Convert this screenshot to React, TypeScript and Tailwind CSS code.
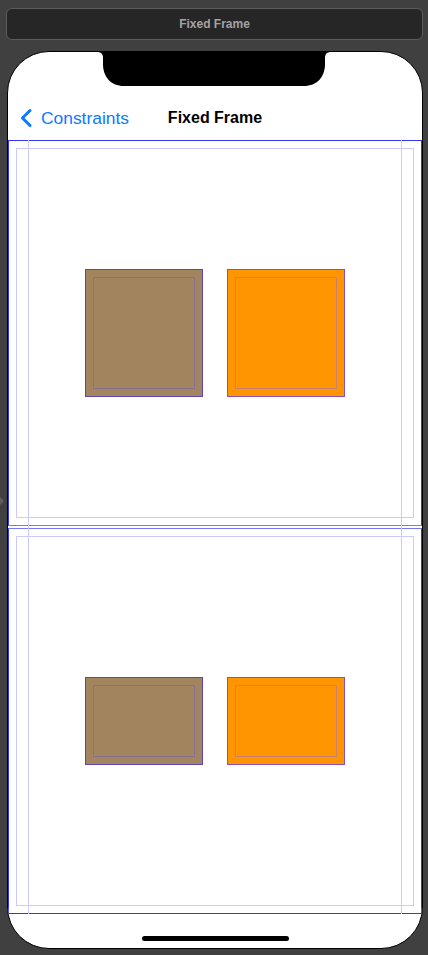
import React from 'react'

const font = { fontFamily: '"Liberation Sans", Arial, sans-serif' }

function FrameBox({ tall, orange }: { tall: boolean; orange?: boolean }) {
  const outer = orange ? 'bg-[#ff9500] border-[#8a52b8]' : 'bg-[#a2845e] border-[#5b45b8]'
  const inner = orange ? 'border-[#c98070]' : 'border-[#85708f]'
  return (
    <div className={`w-[118px] ${tall ? 'h-[128px]' : 'h-[88px]'} border ${outer} p-[7px] flex`}>
      <div className={`flex-1 border ${inner}`} />
    </div>
  )
}

function Section({ tall, className }: { tall: boolean; className?: string }) {
  return (
    <div className={`h-[386px] border-x border-[#3535ee] ${className ?? ''} p-[7px] flex`}>
      <div className="flex-1 border border-[#cacaff] flex items-center justify-center gap-[24px]">
        <FrameBox tall={tall} />
        <FrameBox tall={tall} orange />
      </div>
    </div>
  )
}

export default function App() {
  return (
    <div className="relative w-[428px] h-[955px] bg-[#404040] overflow-hidden flex flex-col" style={font}>
      {/* window title */}
      <div className="ml-[6px] mt-[8px] w-[417px] h-[32px] rounded-[6px] border border-[#5c5c5c] bg-[#262626] flex items-center justify-center text-[12px] font-bold text-[#a3a3a3]">
        Fixed Frame
      </div>

      {/* little side handle */}
      <div className="absolute left-0 top-[497px] w-0 h-0 border-y-[4px] border-y-transparent border-l-[4px] border-l-[#5e5e5e]" />

      {/* device */}
      <div className="relative ml-[7px] mt-[11px] w-[416px] h-[898px] rounded-[42px] border border-black bg-white overflow-hidden flex flex-col">
        <svg className="absolute top-0 left-[89px]" width="234" height="34" viewBox="0 0 234 34">
          <path d="M0 0 C4 0 6 2 6 6 L6 12 C6 25 14 34 27 34 L207 34 C220 34 228 25 228 12 L228 6 C228 2 230 0 234 0 Z" fill="#000" />
        </svg>

        <div className="h-[44px] shrink-0" />

        {/* nav bar */}
        <div className="h-[44px] shrink-0 grid grid-cols-[1fr_auto_1fr] items-center">
          <div className="flex items-center pl-[12px] gap-[9px] text-[#0a7aff] text-[17.4px]">
            <svg width="12" height="20" viewBox="0 0 12 20">
              <path d="M10 2.5 L2.5 10 L10 17.5" fill="none" stroke="#0a7aff" strokeWidth="3" strokeLinecap="round" strokeLinejoin="round" />
            </svg>
            <span>Constraints</span>
          </div>
          <div className="text-[16px] font-bold text-black">Fixed Frame</div>
          <div />
        </div>

        {/* safe area */}
        <div className="relative h-[774px] shrink-0 flex flex-col">
          <Section tall className="border-t border-t-[#3535ee] border-b border-b-[#7878f0]" />
          <div className="h-[2px]" />
          <Section tall={false} className="border-t border-t-[#7878f0] border-b border-b-[#3535ee]" />
          <div className="absolute top-0 bottom-0 left-[20px] w-px bg-[#cacaff]" />
          <div className="absolute top-0 bottom-0 left-[393px] w-px bg-[#cacaff]" />
        </div>

        {/* home indicator */}
        <div className="flex-1 flex justify-center pt-[22px]">
          <div className="w-[147px] h-[5px] rounded-full bg-black" />
        </div>
      </div>
    </div>
  )
}
